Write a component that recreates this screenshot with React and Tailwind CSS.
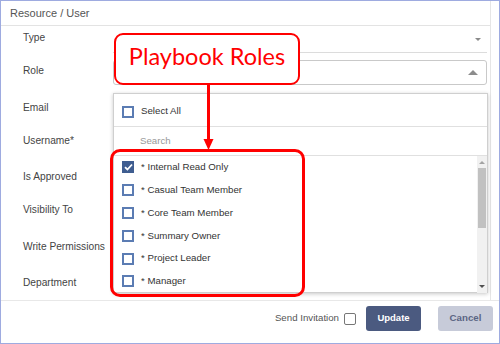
import React from "react";

function Box({ checked }) {
  if (checked) {
    return (
      <div className="w-[12px] h-[12px] bg-[#3f5d90] border border-[#3f5d90] flex items-center justify-center shrink-0">
        <svg width="9" height="8" viewBox="0 0 9 8">
          <path d="M1 4.2 L3.4 6.5 L8 1.5" fill="none" stroke="#ffffff" strokeWidth="1.8" />
        </svg>
      </div>
    );
  }
  return <div className="w-[12px] h-[12px] border-2 border-[#5b7cb3] bg-white shrink-0" />;
}

const roles = [
  ["* Internal Read Only", true],
  ["* Casual Team Member", false],
  ["* Core Team Member", false],
  ["* Summary Owner", false],
  ["* Project Leader", false],
  ["* Manager", false],
];

export default function App() {
  return (
    <div className="relative w-[500px] h-[344px] bg-white border border-[#9eabe0] flex flex-col overflow-hidden font-['Liberation_Sans',Arial,sans-serif]">
      <div className="flex-1 flex flex-col mr-[8px] border-r border-[#e6e6e6]">
        <div className="h-[25px] shrink-0 border-b border-[#e3e3e3] pl-[9px] flex items-center text-[11px] text-[#555]">
          Resource / User
        </div>
        <div className="flex-1 flex flex-col pl-[22px] pr-[3px] text-[10.2px] text-[#444]">
          <div className="h-[27px] flex items-center">
            <div className="w-[90px] pb-[3px]">Type</div>
            <div className="flex-1 h-full border-b border-[#dcdcdc] flex items-center justify-end pr-[6px]">
              <div className="w-0 h-0 border-l-[3px] border-r-[3px] border-t-[3px] border-l-transparent border-r-transparent border-t-[#8a8a8a]" />
            </div>
          </div>
          <div className="h-[25px] mt-[7px] flex items-center">
            <div className="w-[90px] pb-[3px]">Role</div>
            <div className="flex-1 h-full border border-[#c9c9c9] rounded-[3px] flex items-center justify-end pr-[8px]">
              <div className="w-0 h-0 border-l-[5px] border-r-[5px] border-b-[5px] border-l-transparent border-r-transparent border-b-[#8c8c8c]" />
            </div>
          </div>
          <div className="h-[24px] mt-[11px] flex items-center">Email</div>
          <div className="h-[24px] mt-[9px] flex items-center">Username*</div>
          <div className="h-[24px] mt-[12px] flex items-center">Is Approved</div>
          <div className="h-[24px] mt-[9px] flex items-center">Visibility To</div>
          <div className="h-[24px] mt-[13px] flex items-center">Write Permissions</div>
          <div className="h-[24px] mt-[12px] flex items-center">Department</div>
        </div>
      </div>
      <div className="h-[43px] shrink-0 border-t border-[#e8e8e8] flex items-start justify-end pt-[5px] pr-[6px]">
        <div className="h-[25px] flex items-center text-[9.7px] text-[#555]">Send Invitation</div>
        <div className="h-[25px] flex items-center ml-[5px]">
          <div className="w-[12px] h-[12px] border border-[#777] rounded-[2px] bg-white" />
        </div>
        <div className="ml-[10px] w-[55px] h-[25px] rounded-[3px] bg-[#4b5a80] text-white font-bold text-[9.5px] flex items-center justify-center">
          Update
        </div>
        <div className="ml-[17px] w-[55px] h-[25px] rounded-[3px] bg-[#c7cbd9] text-[#5b6584] font-bold text-[9.7px] flex items-center justify-center">
          Cancel
        </div>
      </div>

      {/* dropdown menu */}
      <div className="absolute left-[112px] top-[92px] w-[375px] h-[200px] bg-white border border-[#cfcfcf] shadow-[0_1px_4px_rgba(0,0,0,0.22)] flex flex-col text-[9.7px] text-[#333]">
        <div className="h-[33px] shrink-0 border-b border-[#e0e0e0] flex items-center pl-[8px] pt-[3px] gap-[7px]">
          <Box checked={false} />
          <span>Select All</span>
        </div>
        <div className="h-[29px] shrink-0 border-b border-[#e0e0e0] flex items-center pl-[26px] text-[#999]">
          Search
        </div>
        <div className="flex-1 flex">
          <div className="flex-1 flex flex-col">
            {roles.map(([name, checked]) => (
              <div key={name} className="h-[22.8px] flex items-center pl-[8px] gap-[7px]">
                <Box checked={checked} />
                <span>{name}</span>
              </div>
            ))}
          </div>
          <div className="w-[10px] bg-[#f1f1f1] flex flex-col">
            <div className="h-[12px] flex items-center justify-center">
              <div className="w-0 h-0 border-l-[3px] border-r-[3px] border-b-[3px] border-l-transparent border-r-transparent border-b-[#a3a3a3]" />
            </div>
            <div className="h-[60px] mx-[1px] bg-[#c1c1c1]" />
            <div className="flex-1" />
            <div className="h-[12px] flex items-center justify-center">
              <div className="w-0 h-0 border-l-[3px] border-r-[3px] border-t-[3px] border-l-transparent border-r-transparent border-t-[#505050]" />
            </div>
          </div>
        </div>
      </div>

      {/* annotation: callout */}
      <div className="absolute left-[113px] top-[32px] w-[186px] h-[52px] bg-white border-2 border-[#ff0000] rounded-[9px] flex items-center justify-center pb-[5px] text-[#ff0000] text-[23.5px] font-['Lato',sans-serif] leading-none">
        Playbook Roles
      </div>
      {/* annotation: arrow */}
      <svg className="absolute left-[202px] top-[84px]" width="11" height="66" viewBox="0 0 11 66">
        <line x1="5.5" y1="0" x2="5.5" y2="56" stroke="#ff0000" strokeWidth="3" />
        <polygon points="0.5,54 10.5,54 5.5,65" fill="#ff0000" />
      </svg>
      {/* annotation: highlight box */}
      <div className="absolute left-[109px] top-[148px] w-[195px] h-[148px] border-[3px] border-[#ff0000] rounded-[10px]" />
    </div>
  );
}
